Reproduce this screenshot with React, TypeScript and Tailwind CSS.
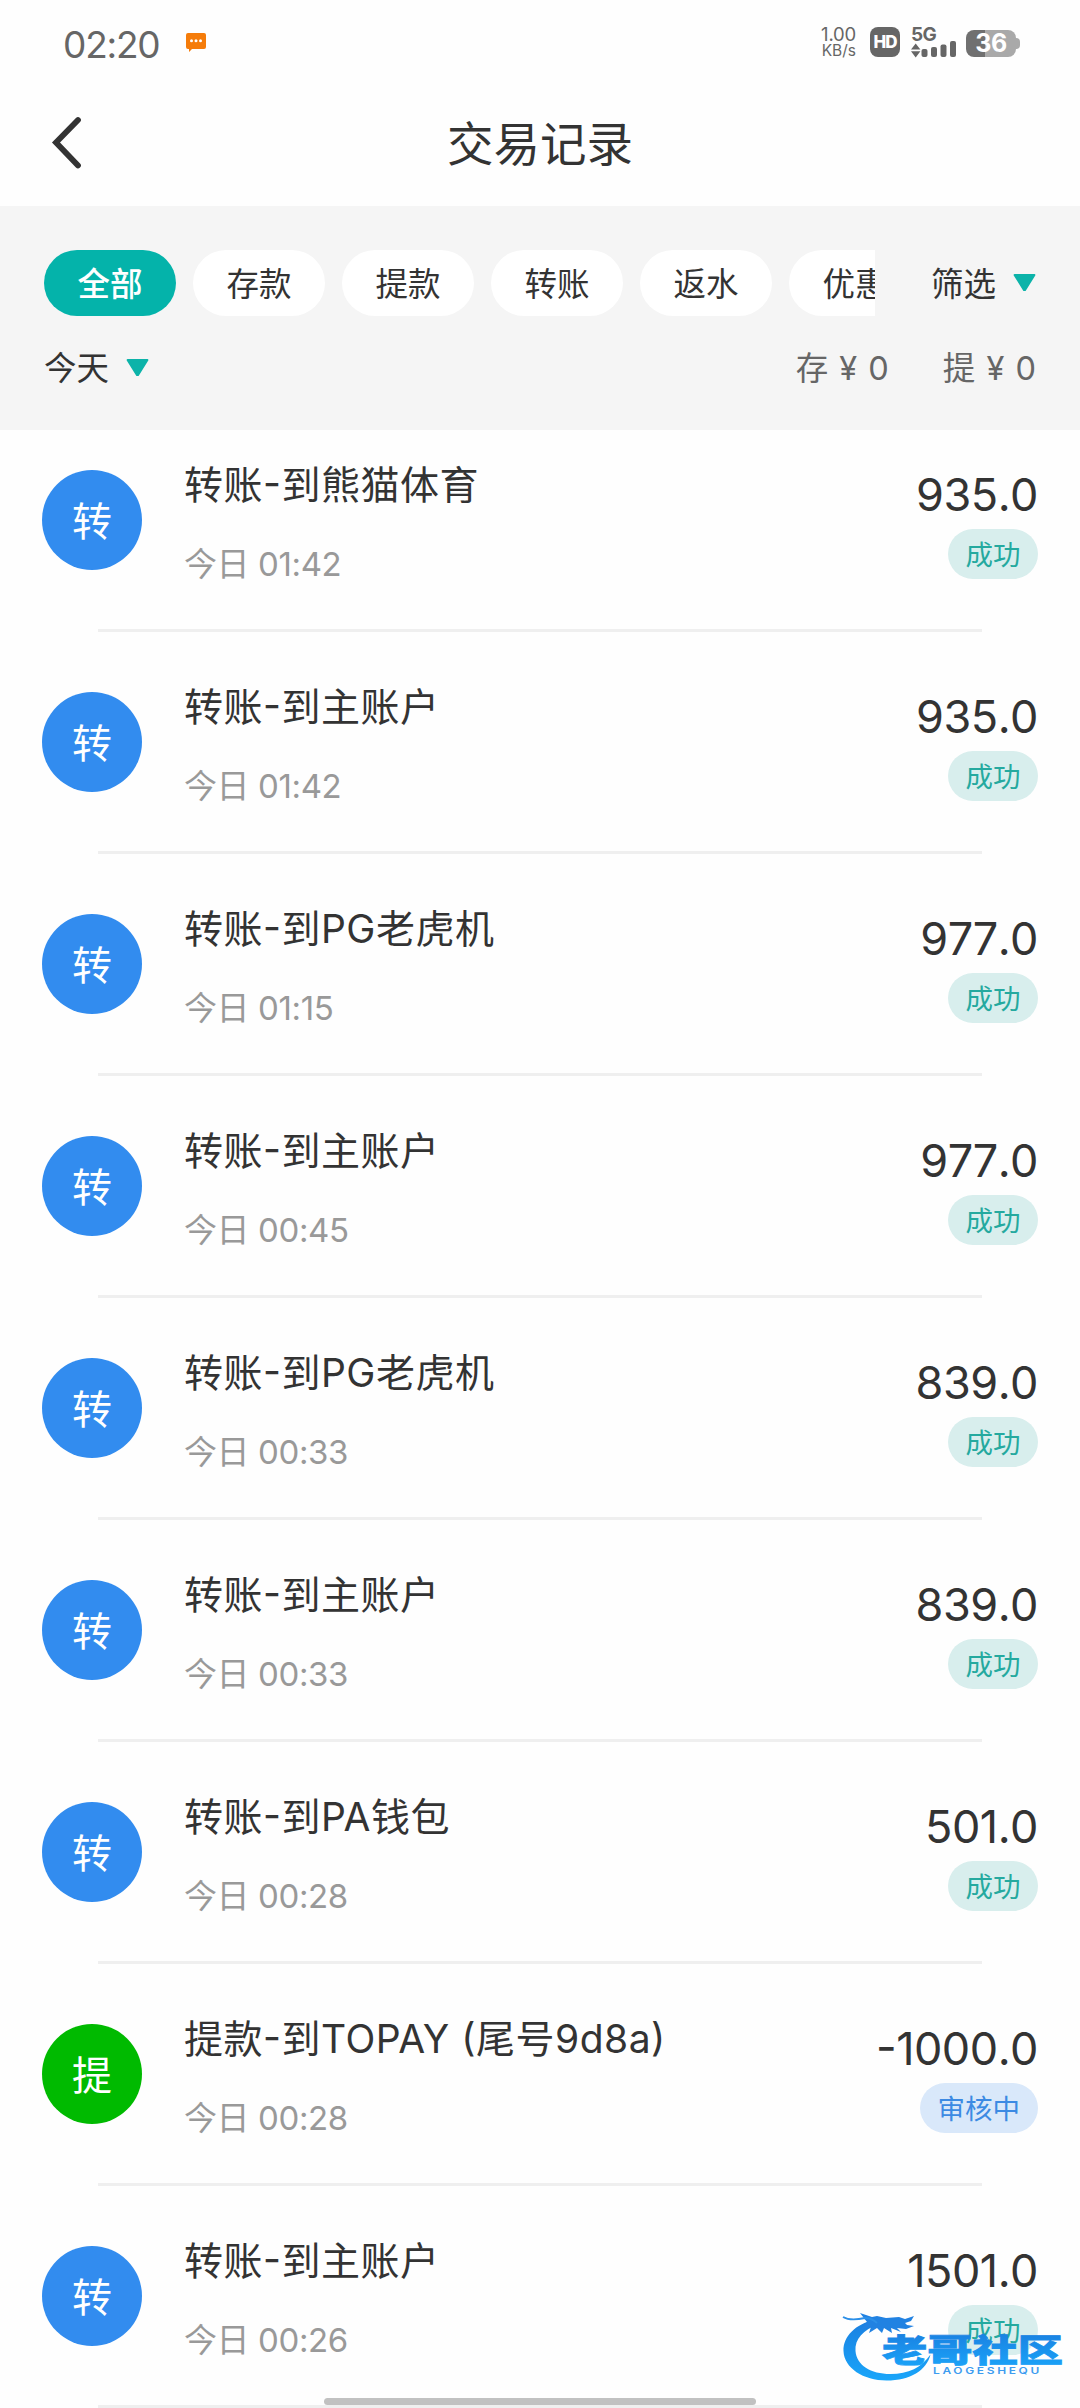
import React, { useState } from "react";

type Status = "success" | "pending";

interface TransactionRecord {
  kind: "转" | "提";
  title: string;
  time: string;
  amount: string;
  status: Status;
}

const FILTERS = ["全部", "存款", "提款", "转账", "返水", "优惠"];

const RECORDS: TransactionRecord[] = [
  { kind: "转", title: "转账-到熊猫体育", time: "01:42", amount: "935.0", status: "success" },
  { kind: "转", title: "转账-到主账户", time: "01:42", amount: "935.0", status: "success" },
  { kind: "转", title: "转账-到PG老虎机", time: "01:15", amount: "977.0", status: "success" },
  { kind: "转", title: "转账-到主账户", time: "00:45", amount: "977.0", status: "success" },
  { kind: "转", title: "转账-到PG老虎机", time: "00:33", amount: "839.0", status: "success" },
  { kind: "转", title: "转账-到主账户", time: "00:33", amount: "839.0", status: "success" },
  { kind: "转", title: "转账-到PA钱包", time: "00:28", amount: "501.0", status: "success" },
  { kind: "提", title: "提款-到TOPAY (尾号9d8a)", time: "00:28", amount: "-1000.0", status: "pending" },
  { kind: "转", title: "转账-到主账户", time: "00:26", amount: "1501.0", status: "success" },
];

// Small rounded triangle used by the dropdown triggers
function Caret() {
  return (
    <svg width="23" height="18" viewBox="0 0 23 18" aria-hidden="true">
      <path
        d="M1.5 1h20L12 16.200h-1z"
        fill="#0cb3a9"
        stroke="#0cb3a9"
        strokeWidth="1.8"
        strokeLinejoin="round"
      />
    </svg>
  );
}

function StatusBar() {
  return (
    <div className="flex h-[84px] shrink-0 items-start justify-between pr-[60px] pl-[63px] text-[#666]">
      <div className="flex items-start">
        <span className="mt-[25px] w-[123px] text-[37px] leading-[40px] tracking-[-1.2px]">
          02:20
        </span>
        <svg className="mt-[33px]" width="20" height="19" viewBox="0 0 20 19" aria-hidden="true">
          <path d="M2 0h16a2 2 0 0 1 2 2v12a2 2 0 0 1-2 2H6l-3 3v-3H2a2 2 0 0 1-2-2V2a2 2 0 0 1 2-2z" fill="#f57c0a" />
          <circle cx="5.5" cy="7.8" r="1.5" fill="#fff" />
          <circle cx="10" cy="7.8" r="1.5" fill="#fff" />
          <circle cx="14.5" cy="7.8" r="1.5" fill="#fff" />
        </svg>
      </div>

      <div className="flex items-start pt-[27px]">
        <div className="mr-[14px] flex w-[37px] flex-col items-end">
          <span className="text-[18.5px] leading-[15px] tracking-[-0.2px]">1.00</span>
          <span className="mt-[1px] text-[15.5px] leading-[16px]">KB/s</span>
        </div>
        {/* HD voice */}
        <div className="mr-[11px] flex size-[30px] items-center justify-center rounded-lg bg-[#666] text-[17px] leading-none font-extrabold text-white">
          <span className="tracking-[-1px]">HD</span>
        </div>
        {/* Signal strength */}
        <div className="mr-[10px] flex w-[45px] flex-col">
          <span className="h-[15px] text-[19px] leading-[15px] font-bold tracking-[-0.6px]">
            5G
          </span>
          <svg className="-mt-px" width="45" height="17" viewBox="0 0 45 17" fill="#666" aria-hidden="true">
            <path d="M4.7 2.5 9.400 8.600H0zM4.700 16.400 0 10.300H9.400z" />
            <rect x="10.5" y="8" width="6" height="8" rx="2" />
            <rect x="20" y="6" width="6" height="10" rx="2" />
            <rect x="29.500" y="3.500" width="6" height="12.500" rx="2" />
            <rect x="39" y="0" width="6" height="16" rx="2" />
          </svg>
        </div>
        {/* Battery */}
        <div className="mt-[3px] flex items-center">
          <div className="flex h-[27px] w-[50px] items-center justify-center rounded-lg bg-linear-to-r from-[#707070] from-37% to-[#a9a9a9] to-37% text-[25px] leading-none font-bold tracking-[-0.5px] text-white">
            36
          </div>
          <div className="h-[11px] w-[4px] rounded-r-full bg-[#a9a9a9]" />
        </div>
      </div>
    </div>
  );
}

function Badge({ status }: { status: Status }) {
  if (status === "pending") {
    return (
      <span className="h-[50px] rounded-full bg-[#d9e8fa] px-[18px] text-[27.5px] leading-[53px] text-[#3c8ae3]">
        审核中
      </span>
    );
  }
  return (
    <span className="h-[50px] rounded-full bg-[#d8eeed] px-[17.500px] text-[27.5px] leading-[53px] text-[#25a99f]">
      成功
    </span>
  );
}

function RecordRow({ record }: { record: TransactionRecord }) {
  return (
    <li className="mb-5 flex h-[202px] shrink-0 flex-col">
      <div className="flex h-[199px] items-start pr-[42px] pl-[42px]">
        <div
          className={`mt-10 size-[100px] rounded-full text-center text-[40px] leading-[103px] text-white ${
            record.kind === "提" ? "bg-[#00ba00]" : "bg-[#328cef]"
          }`}
        >
          {record.kind}
        </div>
        <div className="ml-[42px] flex flex-1 flex-col">
          <span className="mt-[29px] text-[39px] leading-[52px] tracking-[0.5px] whitespace-nowrap [font-feature-settings:'case']">
            {record.title}
          </span>
          <span className="mt-[31px] text-[33px] leading-[44px] tracking-[-0.4px] whitespace-nowrap text-[#999] [font-kerning:none]">
            今日 {record.time}
          </span>
        </div>
        <div className="flex flex-col items-end">
          <span className="mt-[37px] mb-[6px] text-[45px] leading-[56px] tracking-[-0.5px] [font-feature-settings:'case'] [font-kerning:none]">
            {record.amount}
          </span>
          <Badge status={record.status} />
        </div>
      </div>
      <div className="mx-[98px] h-[3px] bg-[#efefef]" />
    </li>
  );
}

// Community logo floating over the lower right corner
function Watermark() {
  return (
    <svg
      className="absolute top-[2308px] left-[838px]"
      width="230"
      height="78"
      viewBox="0 0 230 78"
      aria-hidden="true"
    >
      <defs>
        <linearGradient id="wm" x1="0" y1="0" x2="0" y2="1">
          <stop offset="0" stopColor="#1a7fe0" />
          <stop offset="1" stopColor="#1aa6fa" />
        </linearGradient>
      </defs>
      {/* Dragon body */}
      <path
        d="M36 12C18 16 5 28 5.500 43c.5 17 20 29.500 43 29.500 24 0 40-10 44-26-9 13-22 19.500-40 19.500-20 0-34-9-35-23-1-12 8-21 23-27z"
        fill="url(#wm)"
      />
      {/* Head and horns */}
      <path
        d="M22 5l12 4 5-1 9 2 13-1 6 2 9-3-3 5-6 2 2 2 7 1-8 3-9-1 4 4-10-4 1 5-8-5-2 5-5-5-8 5 2-6-11 3 7-8z"
        fill="#2182e2"
      />
      {/* Whiskers */}
      <path d="M5 9c5 3 13 3 22 1 6 0 9 2 12 5" stroke="#2b8fe8" strokeWidth="1.800" fill="none" />
      <text
        x="44"
        y="54"
        textLength="181"
        lengthAdjust="spacingAndGlyphs"
        fontSize="32"
        fontWeight="900"
        fill="url(#wm)"
        stroke="url(#wm)"
        strokeWidth="0.8"
      >
        老哥社区
      </text>
      <text
        x="95"
        y="66"
        textLength="109"
        lengthAdjust="spacingAndGlyphs"
        fontSize="9"
        fontWeight="600"
        letterSpacing="2"
        fill="#3d9cf0"
      >
        LAOGESHEQU
      </text>
    </svg>
  );
}

export default function App() {
  const [activeFilter, setActiveFilter] = useState("全部");

  return (
    <div className="relative flex h-[2408px] w-[1080px] flex-col overflow-hidden bg-[#fefefe] font-['Inter','Noto_Sans_CJK_SC',sans-serif] text-[#333]">
      <StatusBar />

      {/* Title bar */}
      <header className="grid h-[122px] shrink-0 grid-cols-3 items-center px-[50px] pb-[5px]">
        <button type="button" aria-label="返回" className="justify-self-start">
          <svg width="34" height="54" viewBox="0 0 34 54" fill="none">
            <path d="M28 4 6 26.500l22 23" stroke="#333" strokeWidth="5.800" strokeLinecap="round" />
          </svg>
        </button>
        <h1 className="pt-0.5 text-center text-[46.5px] leading-[60px]">交易记录</h1>
      </header>

      {/* Filters */}
      <section className="flex h-[224px] shrink-0 flex-col bg-[#f5f5f5] px-11 pt-11">
        <div className="flex items-center">
          <div className="flex w-[831px] gap-[17px] overflow-hidden">
            {FILTERS.map((filter) => (
              <button
                key={filter}
                type="button"
                onClick={() => setActiveFilter(filter)}
                className={`h-[66px] w-[132px] shrink-0 rounded-full text-[32.5px] leading-[70px] ${
                  filter === activeFilter ? "bg-[#04b3aa] font-medium text-white" : "bg-white"
                }`}
              >
                {filter}
              </button>
            ))}
          </div>
          <button type="button" className="ml-auto flex items-center gap-[17px] text-[32.5px]">
            <span className="pt-1">筛选</span>
            <Caret />
          </button>
        </div>
        <div className="mt-[27px] flex items-center justify-between text-[32.5px] leading-[48px]">
          <button type="button" className="flex items-center gap-[17px]">
            <span className="pt-0.5">今天</span>
            <Caret />
          </button>
          <div className="flex gap-[54px] pt-0.5 text-[#666] [word-spacing:2px]">
            <span>存 ¥ 0</span>
            <span>提 ¥ 0</span>
          </div>
        </div>
      </section>

      <ul className="flex flex-col">
        {RECORDS.map((record, index) => (
          <RecordRow key={index} record={record} />
        ))}
      </ul>

      <Watermark />

      {/* Gesture bar */}
      <div className="absolute top-[2398px] left-[324px] h-[7px] w-[432px] rounded-full bg-[#c1c1c1]" />
    </div>
  );
}
